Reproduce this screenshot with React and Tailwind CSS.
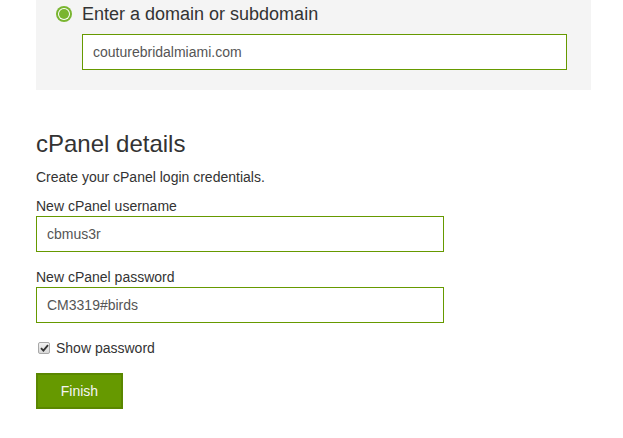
import React from 'react';

function Radio() {
    return (
        <span className="flex items-center justify-center w-[16px] h-[16px] rounded-full bg-[#79b530]">
            <span className="flex items-center justify-center w-[12px] h-[12px] rounded-full bg-white">
                <span className="w-[10px] h-[10px] rounded-full bg-[#79b530]" />
            </span>
        </span>
    );
}

function Field({ label, value }) {
    return (
        <div>
            <div className="h-[20px] leading-[20px] text-[14px] text-[#333]">{label}</div>
            <div className="flex items-center w-[408px] h-[36px] border border-[#669900] px-[10px] text-[14px] text-[#555] bg-white">
                {value}
            </div>
        </div>
    );
}

export default function App() {
    return (
        <div className="min-h-screen w-full bg-white" style={{ fontFamily: '"Liberation Sans", Arial, sans-serif' }}>
            {/* Domain panel */}
            <div className="ml-[36px] w-[555px] h-[90px] bg-[#f4f4f4] pt-[2px]">
                <div className="flex items-center gap-[10px] pl-[20px] h-[24px]">
                    <Radio />
                    <span className="text-[18px] leading-[24px] text-[#333]">Enter a domain or subdomain</span>
                </div>
                <div className="mt-[8px] ml-[46px] flex items-center w-[485px] h-[36px] border border-[#669900] bg-white px-[10px] text-[14px] text-[#555]">
                    couturebridalmiami.com
                </div>
            </div>

            {/* cPanel details */}
            <div className="px-[36px]">
                <h2 className="mt-[40px] text-[24px] leading-[28px] text-[#333]">cPanel details</h2>
                <p className="mt-[9px] text-[14px] leading-[20px] text-[#333]">Create your cPanel login credentials.</p>
                <div className="mt-[9px]">
                    <Field label="New cPanel username" value="cbmus3r" />
                </div>
                <div className="mt-[15px]">
                    <Field label="New cPanel password" value="CM3319#birds" />
                </div>
                <div className="mt-[15px] flex items-center h-[20px]">
                    <span className="ml-[2px] flex items-center justify-center w-[12px] h-[12px] rounded-[2px] border border-[#a8a8a8] bg-gradient-to-b from-[#f2f2f2] to-[#d8d8d8]">
                        <svg width="9" height="8" viewBox="0 0 9 8">
                            <path d="M1 4.2 L3.4 6.6 L8 1.2" fill="none" stroke="#333" strokeWidth="1.8" />
                        </svg>
                    </span>
                    <span className="ml-[6px] text-[14px] text-[#333]">Show password</span>
                </div>
                <button className="mt-[15px] w-[87px] h-[36px] bg-[#669900] border-2 border-[#5a8700] text-[14px] text-[#f4f4f4]">
                    Finish
                </button>
            </div>
        </div>
    );
}
